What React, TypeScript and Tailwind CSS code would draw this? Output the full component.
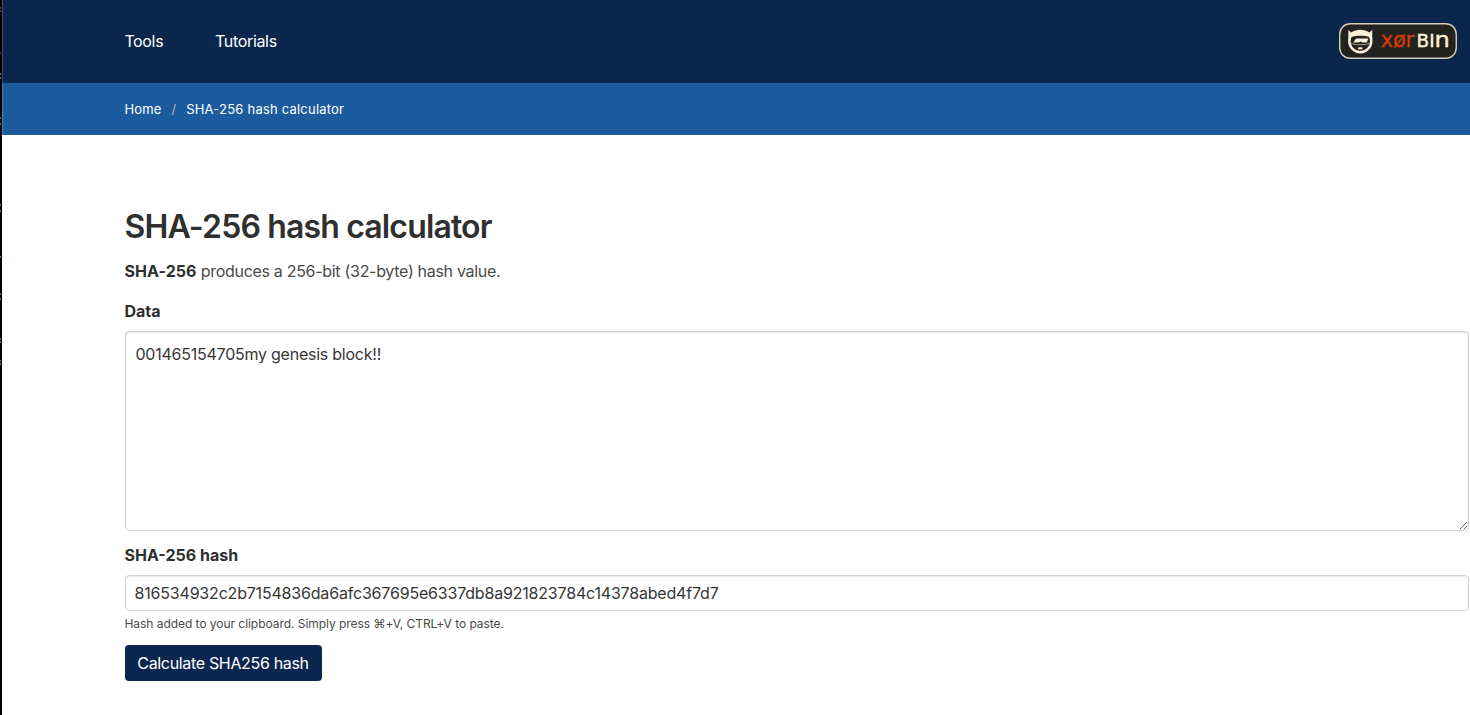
import React from "react";

const edgeMarks = [
  { y: 7, color: "#4a4a4a" },
  { y: 10, color: "#4a4a4a" },
  { y: 52, color: "#333333" },
  { y: 73, color: "#777777" },
  { y: 77, color: "#777777" },
  { y: 117, color: "#666666" },
  { y: 123, color: "#666666" },
  { y: 204, color: "#666666" },
  { y: 210, color: "#666666" },
  { y: 256, color: "#2f9e62" },
  { y: 293, color: "#666666" },
  { y: 298, color: "#666666" },
  { y: 338, color: "#666666" },
  { y: 341, color: "#666666" },
  { y: 360, color: "#666666" },
  { y: 363, color: "#666666" },
];

function Logo() {
  return (
    <svg width="118" height="36" viewBox="0 0 118 36" aria-label="xorbin" className="block">
      <rect x="0.75" y="0.75" width="116.5" height="34.5" rx="10.5" fill="#22231e" stroke="#d9cdb5" strokeWidth="1.4" />
      <path
        d="M9.3 7 L12.2 9.6 C15 7.6 18 6.8 21.3 6.8 C24.6 6.8 27.6 7.6 30.4 9.6 L33.3 7 L33.2 14 C33.4 15.4 33.5 16.6 33.5 18 C33.5 25 28 30.4 21.3 30.4 C14.6 30.4 9.1 25 9.1 18 C9.1 16.6 9.2 15.4 9.4 14 Z"
        fill="#fdf0d8"
      />
      <path d="M12.6 14 C16 12.4 26.6 12.4 30 14 C31.2 16 31.2 19 30.6 21 C29 25.4 25.6 27.8 21.3 27.8 C17 27.8 13.6 25.4 12 21 C11.4 19 11.4 16 12.6 14 Z" fill="#22231e" />
      <path d="M12 20.2 C16 22.2 26.6 22.2 30.6 20.2" fill="none" stroke="#fdf0d8" strokeWidth="0.6" />
      <path d="M14.4 19.6 L17 15.4 H29.4 L27.8 19.6 H23.2 L21.8 18.4 L19.8 19.6 Z" fill="#fdf0d8" />
      <rect x="19.2" y="24.3" width="4.2" height="2" fill="#fdf0d8" />
      <g fontFamily="DejaVu Sans, sans-serif" fontSize="21.6" fill="#d43c0c" stroke="#d43c0c" strokeWidth="0.3">
        <text transform="translate(41.8 24.2) scale(0.98 1)" letterSpacing="-0.4">
          xør
        </text>
      </g>
      <g fontFamily="DejaVu Sans, sans-serif" fill="#fdf0d8" stroke="#fdf0d8" strokeWidth="0.4">
        <text transform="translate(77.6 24.2) scale(1.08 1)" fontSize="17">
          BI
        </text>
        <text transform="translate(95.6 24.2) scale(1.12 1)" fontSize="21.6">
          n
        </text>
      </g>
    </svg>
  );
}

export default function App() {
  return (
    <div className="flex h-[715px] w-full overflow-hidden bg-white font-['Inter',sans-serif] text-base leading-6 text-[#4a4a4a]">
      <svg width="2" height="715" viewBox="0 0 2 715" className="block shrink-0 bg-black">
        {edgeMarks.map((mark) => (
          <rect key={mark.y} x="0" y={mark.y} width="1" height="2" fill={mark.color} />
        ))}
      </svg>
      <div className="min-w-0 flex-1">
        <header className="flex h-[83px] items-center justify-between border-l border-[#3b5171] bg-[#0a264d] pr-[13px] pb-px pl-[121.4px] text-white">
          <nav className="flex gap-[51.7px]">
            <a className="tracking-[-0.35px]">Tools</a>
            <a className="tracking-[-0.32px]">Tutorials</a>
          </nav>
          <Logo />
        </header>
        <nav className="flex h-[52px] items-center border-l border-[#4a7db1] bg-[#1c5b9e] pl-[121.6px] text-[13px] text-white">
          <a className="tracking-[0.12px]">Home</a>
          <span className="px-[10px] text-[#b5b5b5]">/</span>
          <a className="tracking-[0.21px]">SHA-256 hash calculator</a>
        </nav>
        <main className="pt-[74px] pr-px pl-[122.5px]">
          <h1 className="text-[32px] leading-9 font-semibold tracking-[-0.85px] text-[#2f2f2f]">SHA-256 hash calculator</h1>
          <p className="mt-[14px] tracking-[-0.3px]">
            <strong className="font-bold tracking-[0.05px] text-[#2f2f2f]">SHA-256</strong> produces a 256-bit (32-byte) hash value.
          </p>
          <label className="mt-4 block font-bold text-[#2f2f2f]">Data</label>
          <textarea
            className="mt-2 block h-[200px] w-full resize rounded border border-[#d3d3d3] px-[10px] py-[10px] tracking-[-0.24px] text-[#363636] shadow-[inset_0_1px_2px_rgba(10,10,10,0.1)] outline-none"
            defaultValue="001465154705my genesis block!!"
          />
          <label className="mt-3 block font-bold text-[#2f2f2f]">SHA-256 hash</label>
          <input
            className="mt-2 block h-9 w-full rounded border border-[#d3d3d3] px-[9px] tracking-[-0.19px] text-[#363636] shadow-[inset_0_1px_2px_rgba(10,10,10,0.1)] outline-none"
            defaultValue="816534932c2b7154836da6afc367695e6337db8a921823784c14378abed4f7d7"
          />
          <p className="mt-1 text-xs leading-[18px] tracking-[-0.045px]">
            Hash added to your clipboard. Simply press <span className="font-['DejaVu_Sans',sans-serif]">⌘</span>+V, CTRL+V to paste.
          </p>
          <button className="mt-3 h-9 w-[197px] rounded bg-[#0b2750] tracking-[-0.33px] text-white">Calculate SHA256 hash</button>
        </main>
      </div>
    </div>
  );
}
